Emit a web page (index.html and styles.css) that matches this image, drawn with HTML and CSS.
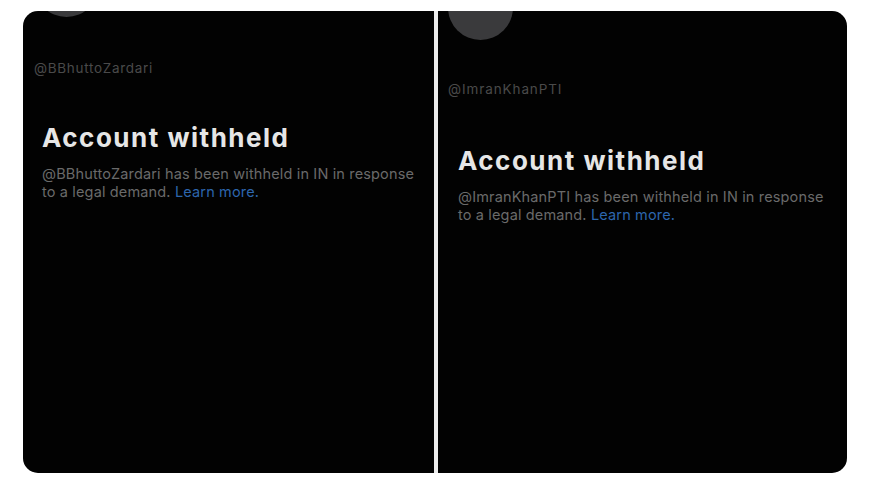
FILE: index.html
```html
<!DOCTYPE html>
<html>
<head>
<meta charset="utf-8">
<link rel="stylesheet" href="styles.css">
</head>
<body>
<div class="frame">
  <div class="panels">
    <section class="panel panel--left">
      <div class="avatar"></div>
      <div class="handle">@BBhuttoZardari</div>
      <div class="notice">
        <h1 class="title">Account withheld</h1>
        <p class="desc">@BBhuttoZardari has been withheld in IN in response to a legal demand. <span class="link">Learn more.</span></p>
      </div>
    </section>
    <section class="panel panel--right">
      <div class="avatar"></div>
      <div class="handle">@ImranKhanPTI</div>
      <div class="notice">
        <h1 class="title">Account withheld</h1>
        <p class="desc">@ImranKhanPTI has been withheld in IN in response to a legal demand. <span class="link">Learn more.</span></p>
      </div>
    </section>
  </div>
</div>
</body>
</html>
```
FILE: styles.css
```css
*, *::before, *::after {
  box-sizing: border-box;
}
html, body {
  margin: 0;
  padding: 0;
  background: #ffffff;
}
.frame {
  padding: 11px 0 0 23px;
}
.panels {
  display: flex;
  gap: 4px;
  width: 824px;
  height: 462px;
  border-radius: 15px;
  overflow: hidden;
  background: #ececec;
}
.panel {
  background: #020202;
  overflow: hidden;
  display: flex;
  flex-direction: column;
  font-family: "Inter", "Liberation Sans", sans-serif;
}
.panel--left {
  width: 411px;
  padding-left: 11px;
}
.panel--right {
  flex: 1;
  padding-left: 10px;
}
.avatar {
  width: 65px;
  height: 65px;
  border-radius: 50%;
  background: #3a3a3c;
  flex: none;
}
.panel--left .avatar { margin-top: -59px; }
.panel--right .avatar { margin-top: -36px; }
.handle {
  font-size: 13.5px;
  line-height: 16px;
  color: #4a4a4a;
  letter-spacing: 0.7px;
  margin-top: 43px;
}
.panel--right .handle { margin-top: 41px; letter-spacing: 0.9px; }
.notice {
  padding-left: 8px;
  margin-top: 47px;
}
.panel--right .notice { padding-left: 10px; margin-top: 49px; }
.title {
  margin: 0;
  font-size: 26px;
  line-height: 30px;
  font-weight: 700;
  color: #e6e6e6;
  letter-spacing: 1.5px;
}
.desc {
  margin: 12px 0 0;
  font-size: 14.5px;
  line-height: 18px;
  color: #6a6a6a;
  letter-spacing: 0.15px;
  width: 377px;
}
.link {
  color: #2d66ad;
}
```
